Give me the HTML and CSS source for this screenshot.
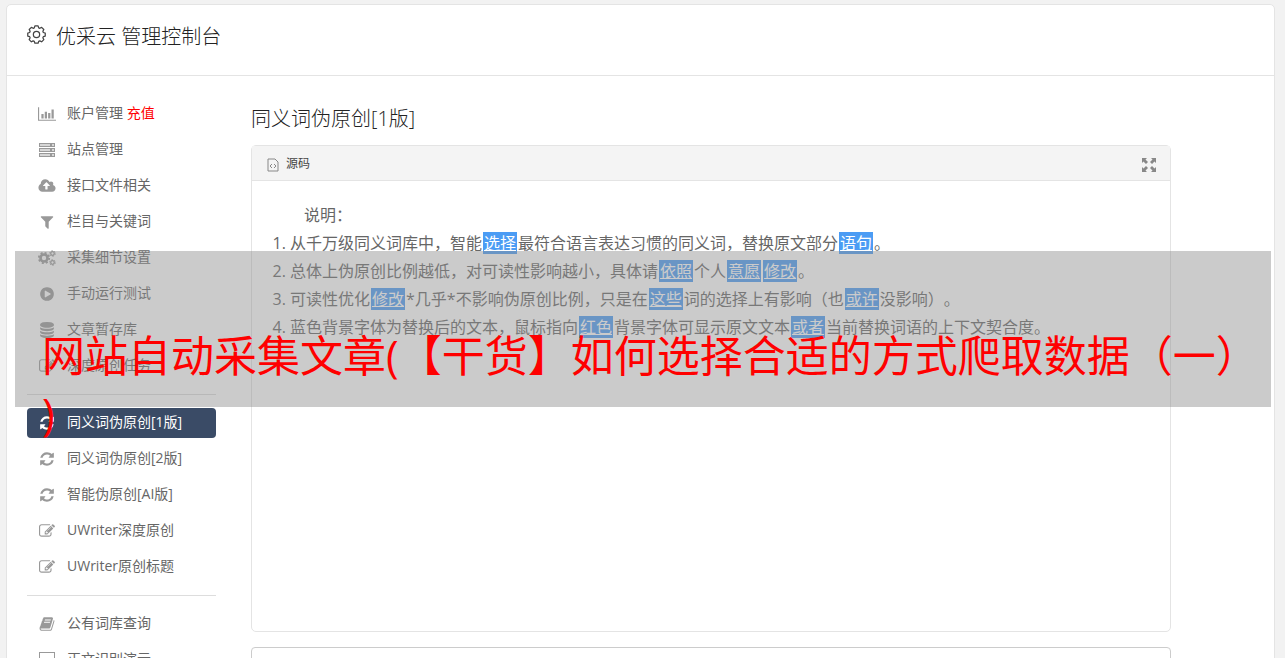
FILE: index.html
```html
<!DOCTYPE html>
<html lang="zh-CN">
  <head>
    <meta charset="UTF-8" />
    <meta name="viewport" content="width=device-width, initial-scale=1.0" />
    <title>优采云 管理控制台</title>
    <link rel="stylesheet" href="styles.css">
  </head>
  <body>
    <!-- Icon shapes shared by the menu -->
    <svg class="sprite" aria-hidden="true">
      <symbol id="i-chart" viewBox="0 0 2048 1792"><path d="M640 896v512h-256v-512h256zm384-256v768h-256v-768h256zm1024 896v128h-2048v-1536h128v1408h1920zm-640-768v640h-256v-640h256zm384-384v1024h-256v-1024h256z"/></symbol>
      <symbol id="i-server" viewBox="0 0 18 16"><path opacity=".4" d="M1 1h16v4H1zM1 6h16v4H1zM1 11h16v4H1z"/><path fill-rule="evenodd" d="M1 1h16v4H1zM2 2v2h14V2zM1 6h16v4H1zM2 7v2h14V7zM1 11h16v4H1zM2 12v2h14v-2zM12 2h2v2h-2zM12 7h2v2h-2zM12 12h2v2h-2z"/></symbol>
      <symbol id="i-cloud" viewBox="0 0 1920 1792"><path d="M1280 864q0-14-9-23l-352-352q-9-9-23-9t-23 9l-351 351q-10 12-10 24 0 14 9 23t23 9h224v352q0 13 9.5 22.5t22.5 9.500h192q13 0 22.500-9.500t9.500-22.500v-352h224q13 0 22.500-9.500t9.500-22.500zm640 288q0 159-112.500 271.500t-271.500 112.500h-1088q-185 0-316.500-131.500t-131.500-316.500q0-130 70-240t188-165q-2-30-2-43 0-212 150-362t362-150q156 0 285.500 87t188.500 231q71-62 166-62 106 0 181 75t75 181q0 76-41 138 130 31 213.500 135.500t83.500 238.500z"/></symbol>
      <symbol id="i-filter" viewBox="0 0 1792 1792"><path d="M1595 295q17 41-14 70l-493 493v742q0 42-39 59-13 5-25 5-27 0-45-19l-256-256q-19-19-19-45v-486l-493-493q-31-29-14-70 17-39 59-39h1280q42 0 59 39z"/></symbol>
      <symbol id="i-cogs" viewBox="0 0 18 16">
        <g fill="none" stroke="currentColor">
          <circle cx="6" cy="8" r="3.500" stroke-width="2.600"/>
          <circle cx="6" cy="8" r="5.200" stroke-width="1.800" stroke-dasharray="2.040 2.040"/>
          <circle cx="14.500" cy="3.500" r="1.800" stroke-width="1.300"/>
          <circle cx="14.500" cy="3.500" r="2.800" stroke-width="1" stroke-dasharray="1.460 1.460"/>
          <circle cx="14.500" cy="12.500" r="1.800" stroke-width="1.300"/>
          <circle cx="14.500" cy="12.500" r="2.800" stroke-width="1" stroke-dasharray="1.460 1.460"/>
        </g>
      </symbol>
      <symbol id="i-play" viewBox="0 0 1792 1792"><path d="M896 128q209 0 385.500 103t279.500 279.500 103 385.500-103 385.500-279.500 279.500-385.500 103-385.500-103-279.500-279.500-103-385.500 103-385.500 279.500-279.500 385.500-103zm384 823q32-18 32-55t-32-55l-544-320q-31-19-64-1-32 19-32 56v640q0 37 32 56 16 8 32 8 17 0 32-9z"/></symbol>
      <symbol id="i-database" viewBox="0 0 1792 1792"><path d="M896 768q237 0 443-43t325-127v170q0 69-103 128t-280 93.500-385 34.500-385-34.500-280-93.500-103-128v-170q119 84 325 127t443 43zm0 768q237 0 443-43t325-127v170q0 69-103 128t-280 93.500-385 34.500-385-34.500-280-93.500-103-128v-170q119 84 325 127t443 43zm0-384q237 0 443-43t325-127v170q0 69-103 128t-280 93.500-385 34.500-385-34.500-280-93.500-103-128v-170q119 84 325 127t443 43zm0-1152q208 0 385 34.500t280 93.500 103 128v128q0 69-103 128t-280 93.500-385 34.500-385-34.500-280-93.500-103-128v-128q0-69 103-128t280-93.500 385-34.500z"/></symbol>
      <symbol id="i-edit" viewBox="0 0 1792 1792"><path d="M888 1184l116-116-152-152-116 116v56h96v96h56zm440-720q-16-16-33 1l-350 350q-17 17-1 33t33-1l350-350q17-17 1-33zm80 594v190q0 119-84.500 203.500t-203.500 84.500h-832q-119 0-203.500-84.500t-84.500-203.500v-832q0-119 84.500-203.500t203.500-84.500h832q63 0 117 25 15 7 18 23 3 17-9 29l-49 49q-14 14-32 8-23-6-45-6h-832q-66 0-113 47t-47 113v832q0 66 47 113t113 47h832q66 0 113-47t47-113v-126q0-13 9-22l64-64q15-15 35-7t20 29zm-96-738l288 288-672 672h-288v-288zm444 132l-92 92-288-288 92-92q28-28 68-28t68 28l152 152q28 28 28 68t-28 68z"/></symbol>
      <symbol id="i-refresh" viewBox="0 0 1792 1792"><path d="M1639 1056q0 5-1 7-64 268-268 434.500t-478 166.500q-146 0-282.500-55t-243.500-157l-129 129q-19 19-45 19t-45-19-19-45v-448q0-26 19-45t45-19h448q26 0 45 19t19 45-19 45l-137 137q71 66 161 102t187 36q134 0 250-65t186-179q11-17 53-117 8-23 30-23h192q13 0 22.500 9.500t9.500 22.500zm25-800v448q0 26-19 45t-45 19h-448q-26 0-45-19t-19-45 19-45l138-138q-148-137-349-137-134 0-250 65t-186 179q-11 17-53 117-8 23-30 23h-199q-13 0-22.500-9.500t-9.500-22.500v-7q65-268 270-434.500t480-166.500q146 0 284 55.500t245 156.500l130-129q19-19 45-19t45 19 19 45z"/></symbol>
      <symbol id="i-book" viewBox="0 0 1792 1792"><path d="M1703 478q40 57 18 129l-275 906q-19 64-76.500 107.500t-122.500 43.500h-923q-77 0-148.500-53.500t-99.500-131.500q-24-67-2-127 0-4 3-27t4-37q1-8-3-21.500t-3-19.500q2-11 8-21t16.500-23.500 16.500-23.500q23-38 45-91.500t30-91.500q3-10 .5-30t-.5-28q3-11 17-28t17-23q21-36 42-92t25-90q1-9-2.500-32t.5-28q4-13 22-30.500t22-22.500q19-26 42.500-84.500t27.500-96.500q1-8-3-25.500t-2-26.500q2-8 9-18t18-23 17-21q8-12 16.500-30.500t15-35 16-36 19.500-32 26.500-23.500 36-11.500 47.500 5.500l-1 3q38-9 51-9h761q74 0 114 56t18 130l-274 906q-36 119-71.500 153.500t-128.500 34.500h-869q-27 0-38 15-11 16-1 43 24 70 144 70h923q29 0 56-15.500t35-41.500l300-987q7-22 5-57 38 15 59 43zm-1064 2q-4 13 2 22.500t20 9.500h608q13 0 25.500-9.500t16.500-22.500l21-64q4-13-2-22.500t-20-9.500h-608q-13 0-25.500 9.500t-16.500 22.500zm-83 256q-4 13 2 22.500t20 9.500h608q13 0 25.500-9.500t16.500-22.500l21-64q4-13-2-22.500t-20-9.500h-608q-13 0-25.500 9.500t-16.500 22.500z"/></symbol>
      <symbol id="i-laptop" viewBox="0 0 18 16"><path fill-rule="evenodd" d="M1 0h16v11H1zM2 1v9h14V1zM0 12h18v2H0z"/></symbol>
    </svg>

    <div class="console">
      <header class="console-header">
        <svg class="gear" viewBox="0 0 20 20" aria-hidden="true">
          <path d="M8.300 1h3.400l.6 2 1.200.5 1.900-1 2.300 2.300-1 1.900.5 1.200 2 .6v3.200l-2 .6-.5 1.200 1 1.900-2.300 2.300-1.900-1-1.200.5-.6 2H8.300l-.6-2-1.200-.5-1.900 1-2.300-2.300 1-1.900-.5-1.200-2-.6V8.500l2-.6.5-1.200-1-1.900 2.300-2.300 1.900 1 1.200-.5z"/>
          <circle cx="10" cy="10" r="3.300"/>
        </svg>
        <h1>优采云 管理控制台</h1>
      </header>

      <div class="console-body">
        <nav class="menu">
          <ul>
            <li><a href="#"><svg><use href="#i-chart"/></svg>账户管理 <em>充值</em></a></li>
            <li><a href="#"><svg><use href="#i-server"/></svg>站点管理</a></li>
            <li><a href="#"><svg><use href="#i-cloud"/></svg>接口文件相关</a></li>
            <li><a href="#"><svg><use href="#i-filter"/></svg>栏目与关键词</a></li>
            <li><a href="#"><svg><use href="#i-cogs"/></svg>采集细节设置</a></li>
            <li><a href="#"><svg><use href="#i-play"/></svg>手动运行测试</a></li>
            <li><a href="#"><svg><use href="#i-database"/></svg>文章暂存库</a></li>
            <li><a href="#"><svg><use href="#i-edit"/></svg>深度原创任务</a></li>
          </ul>
          <ul>
            <li><a class="active" href="#"><svg><use href="#i-refresh"/></svg>同义词伪原创[1版]</a></li>
            <li><a href="#"><svg><use href="#i-refresh"/></svg>同义词伪原创[2版]</a></li>
            <li><a href="#"><svg><use href="#i-refresh"/></svg>智能伪原创[AI版]</a></li>
            <li><a href="#"><svg><use href="#i-edit"/></svg>UWriter深度原创</a></li>
            <li><a href="#"><svg><use href="#i-edit"/></svg>UWriter原创标题</a></li>
          </ul>
          <ul>
            <li><a href="#"><svg><use href="#i-book"/></svg>公有词库查询</a></li>
            <li><a href="#"><svg><use href="#i-laptop"/></svg>正文识别演示</a></li>
          </ul>
        </nav>

        <main class="content">
          <h2>同义词伪原创[1版]</h2>
          <section class="editor">
            <div class="toolbar">
              <button type="button">
                <svg class="icon-source" viewBox="0 0 12 14" aria-hidden="true"><path d="M1 1h7l3 3v9H1zM5 6L3 8l2 2M7 6l2 2-2 2"/></svg>
                源码
              </button>
              <button type="button" aria-label="全屏">
                <svg class="icon-full" viewBox="0 0 14 14" aria-hidden="true"><path d="M0 0h5L3.500 1.500l2.500 2.500-2 2-2.500-2.500L0 5zM14 0v5l-1.500-1.500L10 6 8 4l2.500-2.500L9 0zM0 14V9l1.500 1.500L4 8l2 2-2.500 2.500L5 14zM14 14H9l1.500-1.500L8 10l2-2 2.500 2.500L14 9z"/></svg>
              </button>
            </div>
            <div class="document">
              <p>说明：</p>
              <ol>
                <li>从千万级同义词库中，智能<mark>选择</mark>最符合语言表达习惯的同义词，替换原文部分<mark>语句</mark>。</li>
                <li>总体上伪原创比例越低，对可读性影响越小，具体请<mark>依照</mark>个人<mark>意愿</mark><mark>修改</mark>。</li>
                <li>可读性优化<mark>修改</mark>*几乎*不影响伪原创比例，只是在<mark>这些</mark>词的选择上有影响（也<mark>或许</mark>没影响）。</li>
                <li>蓝色背景字体为替换后的文本，鼠标指向<mark>红色</mark>背景字体可显示原文文本<mark>或者</mark>当前替换词语的上下文契合度。</li>
              </ol>
            </div>
          </section>
          <textarea class="source" aria-label="原文"></textarea>
        </main>
      </div>
    </div>

    <!-- Title banner lying over the console -->
    <div class="banner">网站自动采集文章(【干货】如何选择合适的方式爬取数据（一）<br>)</div>
  </body>
</html>
```
FILE: styles.css
```css
* {
  box-sizing: border-box;
}

body {
  margin: 0;
  padding: 4px 10px 0 6px;
  background-color: #f2f2f2;
  color: #333;
  font-family: "Open Sans", "Noto Sans CJK SC", sans-serif;
  font-size: 14px;
  text-spacing-trim: space-all;
}

h1,
h2,
p,
ul,
ol {
  margin: 0;
  padding: 0;
}

.sprite {
  display: none;
}

.console {
  border: 1px solid #e4e4e4;
  border-radius: 5px;
  background-color: #fff;
}

.console-header {
  display: flex;
  gap: 10px;
  height: 71px;
  padding: 16px 20px;
  border-bottom: 1px solid #e4e4e4;
}

h1,
h2 {
  color: #222;
  font-size: 20px;
  font-weight: 300;
  line-height: 32px;
}

.gear {
  width: 19px;
  height: 19px;
  margin-top: 4px;
  fill: none;
  stroke: #444;
  stroke-width: 1.3;
  stroke-linejoin: round;
}

.console-body {
  display: flex;
  gap: 35px;
  padding: 23px 103px 20px 20px;
}

/* Side menu */
.menu {
  flex: 0 0 189px;
}

.menu ul {
  display: flex;
  flex-direction: column;
  gap: 6px;
  list-style: none;
}

.menu ul + ul {
  margin-top: 13px;
  padding-top: 13px;
  border-top: 1px solid #ddd;
}

.menu a {
  display: flex;
  height: 30px;
  border-radius: 4px;
  color: #666;
  line-height: 28px;
  text-decoration: none;
  white-space: pre;
}

.menu svg {
  width: 18px;
  height: 16px;
  margin: 7px 11px;
  color: #999;
  fill: currentColor;
}

.menu em {
  color: #f00;
  font-style: normal;
}

.menu .active,
.menu .active svg {
  background-color: #3a4b66;
  color: #fff;
}

/* Editor */
.content {
  flex: 1;
  min-width: 0;
}

.content h2 {
  padding: 4px 0 10px;
}

.editor {
  border: 1px solid #e4e4e4;
  border-radius: 5px;
}

.toolbar {
  display: flex;
  justify-content: space-between;
  height: 35px;
  padding: 0 14px 0 15px;
  border-bottom: 1px solid #e4e4e4;
  background-color: #f4f4f4;
}

.toolbar button {
  display: flex;
  align-items: center;
  gap: 7px;
  padding: 0;
  border: 0;
  background: none;
  color: #444;
  font: inherit;
  font-size: 12px;
}

.toolbar svg {
  height: 14px;
  margin-top: 3px;
}

.icon-source {
  width: 12px;
  fill: none;
  stroke: #888;
}

.icon-full {
  width: 14px;
  fill: #888;
}

.document {
  min-height: 450px;
  padding: 20px;
  color: #666;
  font-size: 16px;
  line-height: 28px;
}

.document p {
  text-indent: 2em;
}

.document ol {
  padding-left: 18px;
}

mark {
  margin: 0 1px;
  padding: 0 1px;
  background-color: #4b9cf4;
  color: #fff;
  text-decoration: underline;
}

.source {
  display: block;
  width: 100%;
  height: 200px;
  margin-top: 15px;
  border: 1px solid #ccc;
  border-radius: 4px;
  resize: none;
}

/* Banner */
.banner {
  position: absolute;
  top: 251px;
  left: 15px;
  right: 14px;
  height: 156px;
  padding: 76px 0 0 27px;
  background-color: rgba(142, 142, 142, 0.46);
  color: #f00;
  font-size: 43px;
  line-height: 58px;
  white-space: nowrap;
}
```
